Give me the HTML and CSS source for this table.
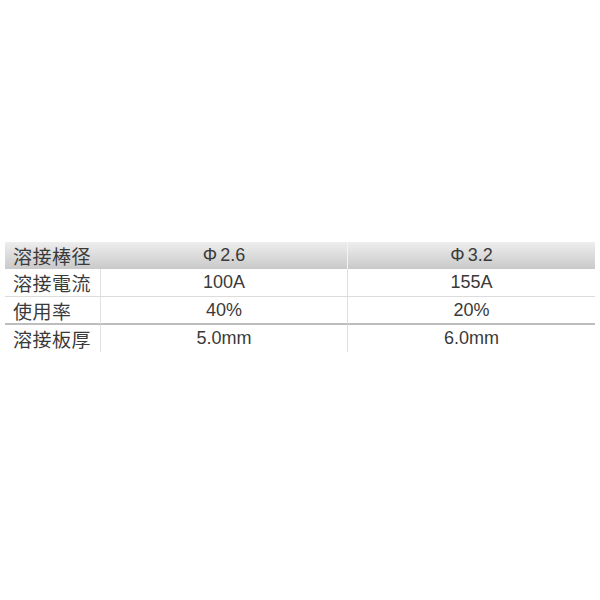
FILE: index.html
```html
<!DOCTYPE html>
<html lang="ja">
<head>
<meta charset="utf-8">
<link rel="stylesheet" href="styles.css">
</head>
<body>
<div class="spec">
  <div class="row head">
    <div class="cell label">溶接棒径</div>
    <div class="cell val"><span class="phi">Φ</span>2.6</div>
    <div class="cell val last"><span class="phi">Φ</span>3.2</div>
  </div>
  <div class="row r1">
    <div class="cell label">溶接電流</div>
    <div class="cell val">100A</div>
    <div class="cell val last">155A</div>
  </div>
  <div class="row r2">
    <div class="cell label">使用率</div>
    <div class="cell val">40%</div>
    <div class="cell val last">20%</div>
  </div>
  <div class="row r3">
    <div class="cell label">溶接板厚</div>
    <div class="cell val">5.0mm</div>
    <div class="cell val last">6.0mm</div>
  </div>
</div>
</body>
</html>
```
FILE: styles.css
```css
html, body {
  margin: 0;
  padding: 0;
  background: #ffffff;
}
.spec {
  margin: 242px 0 0 5px;
  width: 590px;
  color: #3a3a3a;
  font-family: "Liberation Sans", "Noto Sans CJK JP", sans-serif;
}
.row {
  display: grid;
  grid-template-columns: 96px 247px 247px;
}
.head {
  height: 27px;
  background: linear-gradient(#eeeeee, #c9c9c9);
}
.r1 {
  height: 27px;
  border-bottom: 1px solid #dcdcdc;
}
.r2 {
  height: 26px;
  border-bottom: 2px solid #bdbdbd;
}
.r3 {
  height: 27px;
}
.cell {
  display: flex;
  align-items: center;
}
.label {
  padding-left: 8px;
  font-family: "Noto Sans CJK JP", sans-serif;
  font-size: 19px;
  letter-spacing: 0.5px;
  border-right: 1px solid #e2e2e2;
}
.val {
  justify-content: center;
  font-size: 18px;
  border-right: 1px solid #dedede;
}
.phi {
  margin-right: 3px;
}
.last {
  border-right: none;
}
.head .label {
  border-right-color: transparent;
}
.head .val {
  border-right: 1px solid #f4f4f4;
}
.head .last {
  border-right: none;
}
```
